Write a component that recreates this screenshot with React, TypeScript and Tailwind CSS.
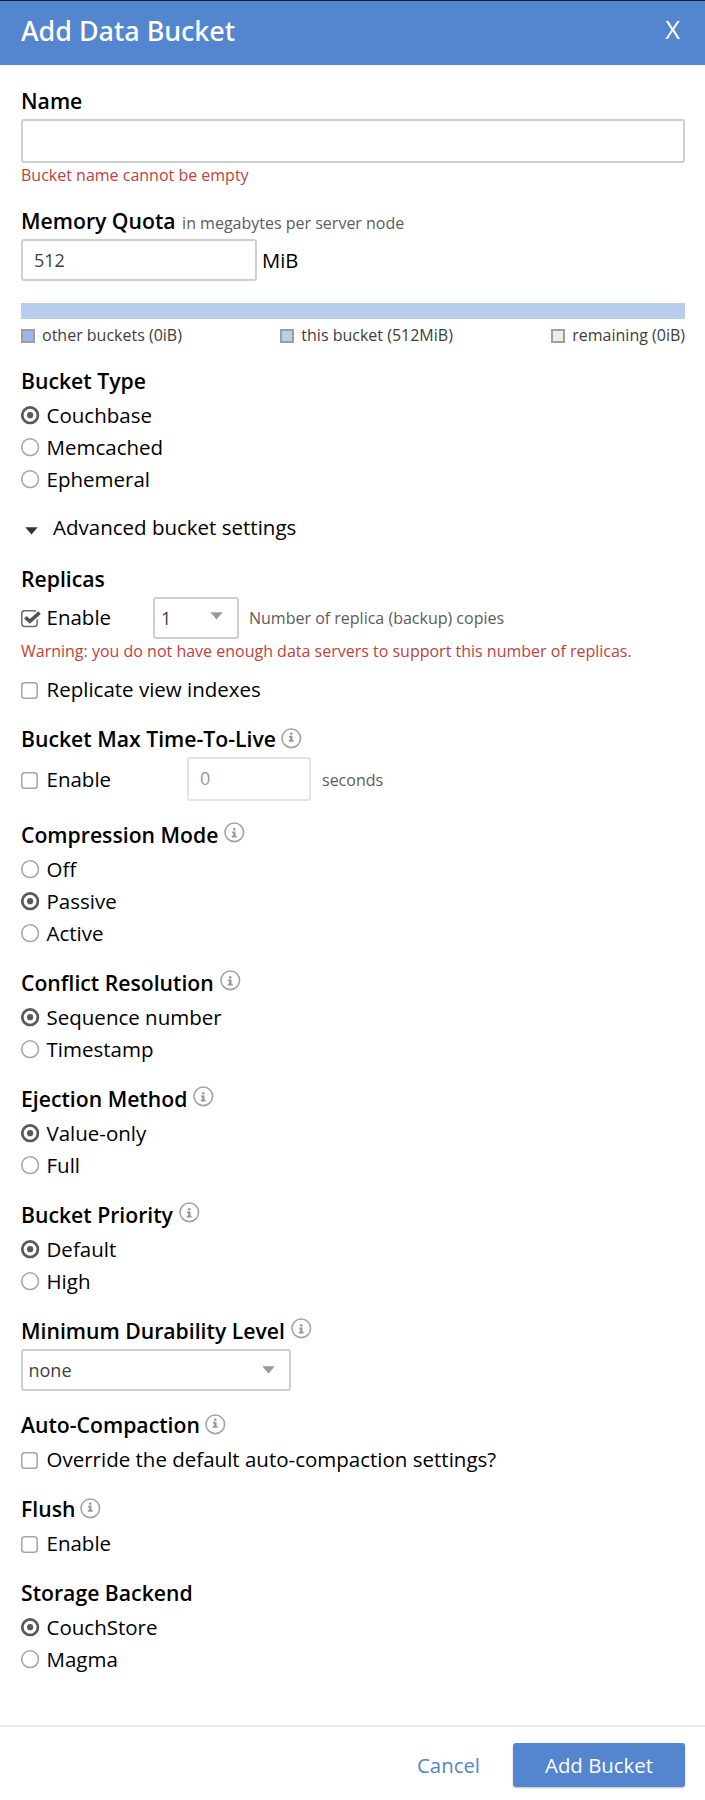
import type { ReactNode } from "react";

function InfoIcon({ raised = false }: { raised?: boolean }) {
  return (
    <svg
      width="21"
      height="21"
      viewBox="0 0 21 21"
      className={raised ? "ml-[6px] mt-[1px] shrink-0" : "ml-[5px] mt-[3px] shrink-0"}
    >
      <circle cx="10.3" cy="10.3" r="9.3" fill="none" stroke="#a3a3a3" strokeWidth="1.6" />
      <g fill="#999999" transform={raised ? "translate(0 0.7)" : "translate(0 -1)"}>
        <rect x="9" y="5.5" width="2.5" height="2.2" rx="0.4" />
        <path d="M7.9 8.8h3.600v4.300h1.200v1.600H7.800v-1.600h1.300v-2.700H7.900z" />
      </g>
    </svg>
  );
}

function Heading({ children, info }: { children: ReactNode; info?: "raised" | "level" }) {
  return (
    <div className="mb-1 flex h-7 items-start text-[21.2px] font-semibold leading-7">
      <span className="whitespace-nowrap">{children}</span>
      {info && <InfoIcon raised={info === "raised"} />}
    </div>
  );
}

function Radio({ label, checked = false }: { label: string; checked?: boolean }) {
  return (
    <label className="flex h-8 items-center gap-[6.5px] leading-8">
      <svg width="19" height="19" viewBox="0 0 19 19" className="mt-px shrink-0">
        {checked ? (
          <>
            <circle cx="9.1" cy="9.2" r="7.8" fill="#fff" stroke="#595959" strokeWidth="2.7" />
            <circle cx="9.1" cy="9.2" r="3.1" fill="#595959" />
          </>
        ) : (
          <circle cx="9.1" cy="9.2" r="8.4" fill="#fff" stroke="#a6a6a6" strokeWidth="1.5" />
        )}
      </svg>
      <span>{label}</span>
    </label>
  );
}

function Checkbox({ label, checked = false }: { label: string; checked?: boolean }) {
  return (
    <label className="flex h-8 items-center gap-[5.5px] leading-8">
      <svg width="20" height="18" viewBox="0 0 20 18" className="mt-[3px] shrink-0">
        {checked ? (
          <>
            <path
              d="M15 1.3C14.5.9 13.8.7 13 .7H3.8C2 .7.8 1.9.8 3.7v9.8c0 1.8 1.2 3 3 3h9.4c1.8 0 3-1.2 3-3V9.6"
              fill="none"
              stroke="#6b6b6b"
              strokeWidth="1.5"
            />
            <path d="M4.300 7.300l4.600 4L18.600 2.600" fill="none" stroke="#555" strokeWidth="3.600" />
          </>
        ) : (
          <rect x="0.8" y="0.8" width="15.4" height="15.4" rx="2.8" fill="#fff" stroke="#a6a6a6" strokeWidth="1.5" />
        )}
      </svg>
      <span>{label}</span>
    </label>
  );
}

function Caret({ className }: { className: string }) {
  return (
    <svg width="13" height="8" viewBox="0 0 13 8" className={className}>
      <path d="M0.3 0.3h12.4L6.5 7.6z" fill="currentColor" />
    </svg>
  );
}

function Legend({ swatch, children }: { swatch: string; children: ReactNode }) {
  return (
    <div className="flex items-center gap-[7px]">
      <span className={`mt-[2px] size-[14px] border-2 border-[#9f9f9f] ${swatch}`} />
      <span>{children}</span>
    </div>
  );
}

export default function App() {
  return (
    <div className="flex h-[1800px] w-[705px] flex-col border-t border-[#15203a] bg-white font-['Open_Sans','Noto_Sans',sans-serif] text-[20.5px] text-black">
      <header className="flex h-16 items-start justify-between bg-[#5386cf] pl-[21px] pr-[25px] text-white">
        <h1 className="pt-[10px] font-['Noto_Sans',sans-serif] text-[26.9px] font-medium leading-[40px]">Add Data Bucket</h1>
        <button className="pt-[8px] text-[25.5px] leading-[40px]">X</button>
      </header>

      <main className="flex flex-1 flex-col gap-5 pl-[21px] pr-5 pt-[22px]">
        <section>
          <Heading>Name</Heading>
          <div className="h-11 rounded-[3px] border-2 border-[#cfcfcf]" />
          <p className="h-6 text-[16px] leading-6 text-[#c13f3d]">Bucket name cannot be empty</p>
        </section>

        <section>
          <div className="mb-1 flex h-7 items-baseline gap-[6.5px] text-[21.2px] leading-7">
            <span className="font-semibold">Memory Quota</span>
            <span className="text-[16px] text-[#5c5c5c]">in megabytes per server node</span>
          </div>
          <div className="flex items-center gap-[5px]">
            <div className="flex h-[42px] w-[236px] items-center rounded-[3px] border-2 border-[#cfcfcf] pl-[11px] text-[18px] text-[#3f3f3f]">
              512
            </div>
            <span className="text-[20.2px] leading-7">MiB</span>
          </div>
          <div className="mt-[22px] h-4 bg-[#b9ceed]" />
          <div className="mt-1 flex h-6 items-center justify-between text-[16px] leading-6 text-[#3d3d3d]">
            <Legend swatch="bg-[#97b7e4]">other buckets (0iB)</Legend>
            <Legend swatch="bg-[#b9ceed]">this bucket (512MiB)</Legend>
            <Legend swatch="bg-[#eeece0]">remaining (0iB)</Legend>
          </div>
        </section>

        <section>
          <Heading>Bucket Type</Heading>
          <Radio label="Couchbase" checked />
          <Radio label="Memcached" />
          <Radio label="Ephemeral" />
          <div className="mt-4 flex h-8 items-center pl-1 leading-8">
            <Caret className="mr-[15px] mt-2 text-[#333]" />
            <span>Advanced bucket settings</span>
          </div>
        </section>

        <section className="mt-[2px]">
          <Heading>Replicas</Heading>
          <div className="flex h-[42px] items-center">
            <div className="w-[132px] pb-[2px]">
              <Checkbox label="Enable" checked />
            </div>
            <div className="flex h-[42px] w-[86px] items-center justify-between rounded-[3px] border-2 border-[#cfcfcf] pl-[6px] pr-[14px] text-[18px] text-[#3f3f3f]">
              <span>1</span>
              <Caret className="mb-[4px] text-[#999]" />
            </div>
            <span className="ml-[10px] text-[16px] text-[#5c5c5c]">Number of replica (backup) copies</span>
          </div>
          <p className="mb-[10px] h-6 text-[16px] leading-6 text-[#c13f3d]">
            Warning: you do not have enough data servers to support this number of replicas.
          </p>
          <Checkbox label="Replicate view indexes" />
        </section>

        <section>
          <Heading info="level">Bucket Max Time-To-Live</Heading>
          <div className="flex h-11 items-center">
            <div className="w-[166px]">
              <Checkbox label="Enable" />
            </div>
            <div className="flex h-11 w-[124px] items-center rounded-[3px] border-2 border-[#e4e4e4] pb-px pl-[11px] text-[18px] text-[#999]">
              0
            </div>
            <span className="ml-[11px] pt-[2px] text-[16px] text-[#5c5c5c]">seconds</span>
          </div>
        </section>

        <section>
          <Heading info="raised">Compression Mode</Heading>
          <Radio label="Off" />
          <Radio label="Passive" checked />
          <Radio label="Active" />
        </section>

        <section>
          <Heading info="raised">Conflict Resolution</Heading>
          <Radio label="Sequence number" checked />
          <Radio label="Timestamp" />
        </section>

        <section>
          <Heading info="raised">Ejection Method</Heading>
          <Radio label="Value-only" checked />
          <Radio label="Full" />
        </section>

        <section>
          <Heading info="raised">Bucket Priority</Heading>
          <Radio label="Default" checked />
          <Radio label="High" />
        </section>

        <section>
          <Heading info="raised">Minimum Durability Level</Heading>
          <div className="flex h-[42px] w-[270px] items-center justify-between rounded-[3px] border-2 border-[#cfcfcf] pl-[5.5px] pr-[14px] text-[18px] text-[#3f3f3f]">
            <span>none</span>
            <Caret className="mb-px text-[#999]" />
          </div>
        </section>

        <section>
          <Heading info="level">Auto-Compaction</Heading>
          <Checkbox label="Override the default auto-compaction settings?" />
        </section>

        <section>
          <Heading info="level">Flush</Heading>
          <Checkbox label="Enable" />
        </section>

        <section>
          <Heading>Storage Backend</Heading>
          <Radio label="CouchStore" checked />
          <Radio label="Magma" />
        </section>
      </main>

      <footer className="flex h-[75px] items-start justify-end border-t-2 border-[#ebebeb] pr-5 pt-4">
        <button className="mr-[33px] h-11 text-[20.4px] text-[#5386cf]">Cancel</button>
        <button className="h-11 w-[172px] rounded-[3px] bg-[#5386cf] text-[20.4px] text-white shadow-[0_1px_2px_rgba(0,0,0,0.25)]">
          Add Bucket
        </button>
      </footer>
    </div>
  );
}
